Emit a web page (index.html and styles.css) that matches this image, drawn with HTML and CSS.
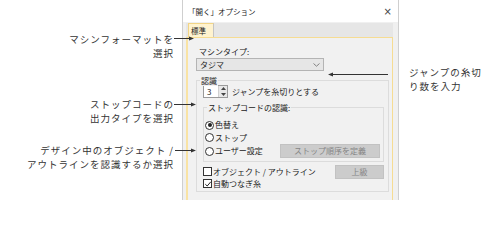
FILE: index.html
```html
<!DOCTYPE html>
<html lang="ja">
<head>
<meta charset="utf-8">
<link rel="stylesheet" href="styles.css">
</head>
<body>
<div class="page">
  <div class="dialog">
    <div class="titlebar">
      <span class="title">「開く」オプション</span>
      <span class="close">×</span>
    </div>
    <div class="dbody">
      <div class="tabstrip"><div class="tab">標準</div></div>
      <div class="panel">
        <div class="label">マシンタイプ:</div>
        <div class="combo">
          <span>タジマ</span>
          <svg class="chev" width="7" height="4" viewBox="0 0 7 4"><path d="M0.5 0.5 L3.5 3.2 L6.5 0.5" fill="none" stroke="#777" stroke-width="0.9"/></svg>
        </div>
        <div class="group">
          <div class="legend">認識</div>
          <div class="spinrow">
            <div class="spin">
              <span class="spinval">3</span>
              <div class="spinbtns">
                <svg width="5" height="3" viewBox="0 0 5 3"><path d="M0 3 L2.5 0 L5 3Z" fill="#444"/></svg>
                <svg width="5" height="3" viewBox="0 0 5 3"><path d="M0 0 L2.5 3 L5 0Z" fill="#444"/></svg>
              </div>
            </div>
            <span>ジャンプを糸切りとする</span>
          </div>
          <div class="subgroup">
            <div class="legend sublegend">ストップコードの認識:</div>
            <div class="radiorow"><span class="radio on"></span>色替え</div>
            <div class="radiorow"><span class="radio"></span>ストップ</div>
            <div class="radiorow last"><span class="radio"></span>ユーザー設定<span class="btn btn-wide">ストップ順序を定義</span></div>
          </div>
          <div class="checkrow first"><span class="check"></span>オブジェクト / アウトライン<span class="btn btn-small">上級</span></div>
          <div class="checkrow second"><span class="check on"><svg width="8" height="8" viewBox="0 0 8 8"><path d="M1.3 4.2 L3.2 6 L6.8 1.8" fill="none" stroke="#222" stroke-width="1"/></svg></span>自動つなぎ糸</div>
        </div>
      </div>
    </div>
  </div>

  <div class="callout left c1">
    <div class="ctext">マシンフォーマットを<br>選択</div>
  </div>
  <div class="callout left c2">
    <div class="ctext">ストップコードの<br>出力タイプを選択</div>
  </div>
  <div class="callout left c3">
    <div class="ctext">デザイン中のオブジェクト /<br>アウトラインを認識するか選択</div>
  </div>
  <svg class="arrow a1" width="20" height="5" viewBox="0 0 20 5"><line x1="0" y1="2.5" x2="16" y2="2.5" stroke="#333" stroke-width="1"/><path d="M20 2.5 L15 0.6 L15 4.4Z" fill="#333"/></svg>
  <svg class="arrow a2" width="22" height="5" viewBox="0 0 22 5"><line x1="0" y1="2.5" x2="18" y2="2.5" stroke="#333" stroke-width="1"/><path d="M22 2.5 L17 0.6 L17 4.4Z" fill="#333"/></svg>
  <svg class="arrow a3" width="21" height="5" viewBox="0 0 21 5"><line x1="0" y1="2.5" x2="17" y2="2.5" stroke="#333" stroke-width="1"/><path d="M21 2.5 L16 0.6 L16 4.4Z" fill="#333"/></svg>
  <svg class="arrow a4" width="60" height="5" viewBox="0 0 60 5"><line x1="4" y1="2.5" x2="60" y2="2.5" stroke="#333" stroke-width="1"/><path d="M0 2.5 L5 0.6 L5 4.4Z" fill="#333"/></svg>
  <div class="callout right c4">
    <div class="ctext">ジャンプの糸切<br>り数を入力</div>
  </div>
</div>
</body>
</html>
```

FILE: styles.css
```css
html, body {
  margin: 0;
  padding: 0;
  background: #ffffff;
}
.page {
  position: relative;
  width: 485px;
  height: 200px;
  overflow: hidden;
  font-family: "Noto Sans CJK JP", "Noto Sans", sans-serif;
}
.dialog {
  margin-left: 182px;
  width: 215px;
  height: 210px;
  border: 1px solid #cfcfcf;
  border-top: none;
  background: #f0f0f0;
  display: flex;
  flex-direction: column;
}
.titlebar {
  height: 22px;
  background: #ffffff;
  display: flex;
  align-items: center;
  justify-content: space-between;
  padding: 0 6px 0 5px;
  font-size: 7.5px;
  color: #222;
}
.close {
  font-size: 10px;
  color: #444;
  font-family: "DejaVu Sans", sans-serif;
}
.dbody {
  padding: 1px 5px 0 3px;
  display: flex;
  flex-direction: column;
}
.tabstrip {
  height: 14px;
  background: #e6e6e6;
  display: flex;
  align-items: flex-end;
  padding-left: 2px;
}
.tab {
  width: 22px;
  height: 13px;
  border: 1px solid #f2d586;
  border-right: 1px solid #c4c4c4;
  border-bottom: none;
  background: #fff3cf;
  font-size: 7.5px;
  line-height: 13px;
  padding-left: 2px;
  color: #222;
}
.panel {
  border: 1px solid #f6dc92;
  border-left: 2px solid #f9e3a4;
  background: #f1f1f1;
  padding: 8px 3px 4px 8px;
  font-size: 8px;
  color: #222;
  height: 170px;
  box-sizing: border-box;
}
.label {
  line-height: 11px;
  padding-left: 3px;
}
.combo {
  margin-top: 1px;
  width: 120px;
  height: 11px;
  border: 1px solid #b4b4b4;
  background: #e6e6e6;
  display: flex;
  align-items: center;
  justify-content: space-between;
  padding: 0 3px 0 3px;
  line-height: 11px;
}
.chev { display: block; }
.group {
  margin-top: 9px;
  border: 1px solid #dcdcdc;
  position: relative;
  padding: 4px 4px 2px 6px;
}
.legend {
  position: absolute;
  top: -6px;
  left: 3px;
  background: #f1f1f1;
  padding: 0 1px;
  line-height: 11px;
}
.spinrow {
  display: flex;
  align-items: center;
  gap: 4px;
  height: 13px;
}
.spin {
  width: 23px;
  height: 11px;
  border: 1px solid #9a9a9a;
  background: #fff;
  display: flex;
  align-items: center;
  justify-content: space-between;
}
.spinval {
  padding-left: 3px;
  line-height: 11px;
}
.spinbtns {
  width: 8px;
  height: 11px;
  background: #e8e8e8;
  border-left: 1px solid #d0d0d0;
  display: flex;
  flex-direction: column;
  align-items: center;
  justify-content: space-around;
}
.spinbtns svg { display: block; }
.subgroup {
  margin-top: 9px;
  border: 1px solid #dcdcdc;
  position: relative;
  padding: 11px 3px 3px 1px;
}
.sublegend { left: 3px; }
.radiorow, .checkrow {
  display: flex;
  align-items: center;
  height: 12.5px;
  line-height: 12px;
}
.radiorow.last { height: 14px; }
.radio {
  width: 7px;
  height: 7px;
  border: 1px solid #333;
  border-radius: 50%;
  background: #fff;
  margin-right: 1px;
  position: relative;
  flex: none;
}
.radio.on::after {
  content: "";
  position: absolute;
  left: 1.5px;
  top: 1.5px;
  width: 4px;
  height: 4px;
  border-radius: 50%;
  background: #222;
}
.check {
  width: 7px;
  height: 7px;
  border: 1px solid #333;
  background: #fff;
  margin-right: 1px;
  flex: none;
  position: relative;
}
.check svg {
  position: absolute;
  left: -0.5px;
  top: -0.5px;
}
.btn {
  margin-left: auto;
  background: #cccccc;
  border: 1px solid #c2c2c2;
  color: #858585;
  height: 12px;
  line-height: 12px;
  text-align: center;
  font-size: 8px;
}
.btn-wide { width: 98px; }
.btn-small { width: 47px; }
.checkrow.first { margin-top: 3px; height: 13px; }
.checkrow.second { height: 11px; }

.callout {
  position: absolute;
  font-size: 9.5px;
  letter-spacing: 1px;
  line-height: 14px;
  color: #333;
}
.callout.left {
  right: 311px;
  text-align: right;
}
.c1 { top: 32px; }
.c2 { top: 97px; }
.c3 { top: 143px; }
.c4 { top: 65px; left: 409px; }
.arrow {
  position: absolute;
  display: block;
}
.a1 { left: 174px; top: 36px; }
.a2 { left: 174px; top: 102px; }
.a3 { left: 175px; top: 148px; }
.a4 { left: 328px; top: 72px; }
```
